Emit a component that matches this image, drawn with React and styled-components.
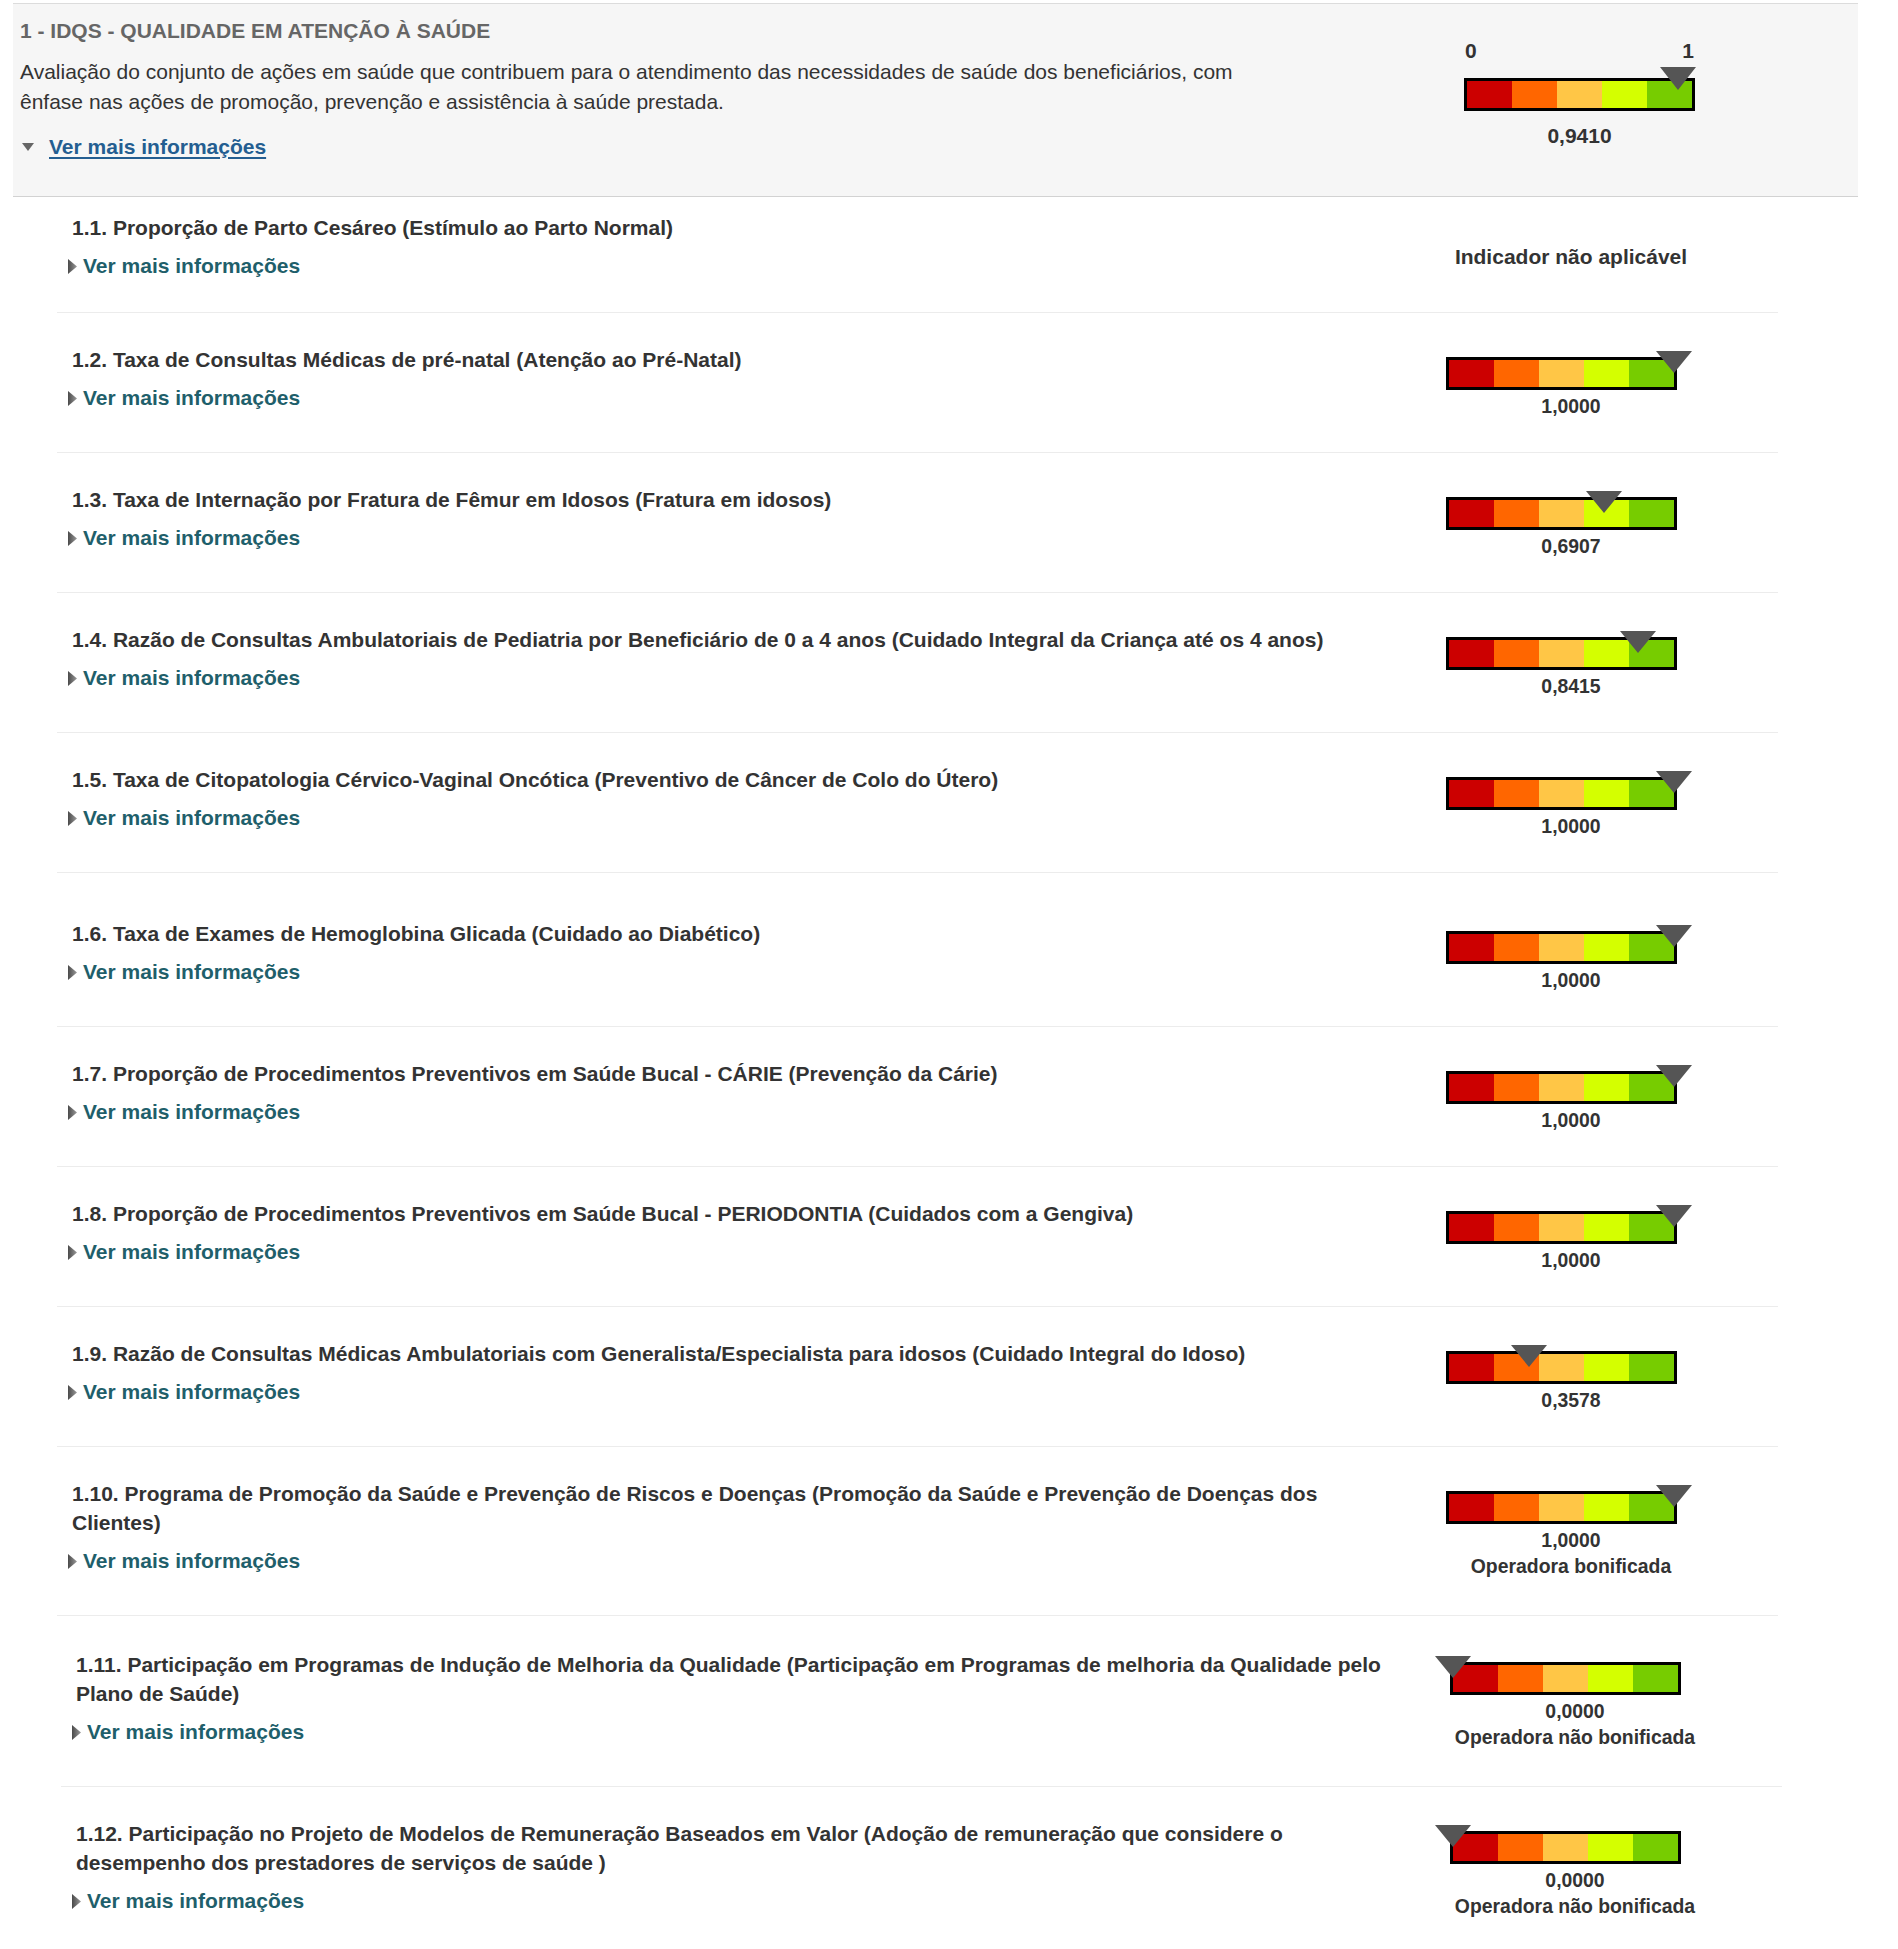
import React from "react";
import styled, { createGlobalStyle } from "styled-components";

const GlobalStyle = createGlobalStyle`
  html, body { margin: 0; padding: 0; background: #ffffff; }
  body {
    font-family: "Liberation Sans", Arial, Helvetica, sans-serif;
    color: #333333;
  }
  * { box-sizing: border-box; }
`;

const SEGMENTS = ["#cc0000", "#ff6600", "#ffc646", "#d4ff00", "#77cc00"];
const INNER = 225;

const Page = styled.div`
  width: 1898px;
  padding-top: 3px;
`;

const Header = styled.section`
  margin-left: 13px;
  width: 1845px;
  background: #f6f6f6;
  border-top: 1px solid #dcdcdc;
  border-bottom: 1px solid #d2d2d2;
  display: flex;
  align-items: flex-start;
  padding: 12px 163px 34px 7px;
`;

const HeaderText = styled.div`
  flex: 0 0 1262px;
`;

const GroupTitle = styled.h2`
  margin: 0;
  font-size: 21px;
  line-height: 30px;
  font-weight: bold;
  color: #666666;
  text-transform: uppercase;
`;

const Description = styled.p`
  margin: 11px 0 0;
  font-size: 21px;
  line-height: 30px;
  color: #333333;
`;

const MoreLink = styled.a`
  display: flex;
  align-items: center;
  gap: ${(p) => (p.$open ? "15px" : "6px")};
  margin-top: ${(p) => (p.$open ? "15px" : "9px")};
  margin-left: ${(p) => (p.$open ? "2px" : "-4px")};
  font-size: 21px;
  line-height: 30px;
  font-weight: bold;
  color: ${(p) => (p.$open ? "#245e91" : "#1f5f6b")};
  text-decoration: ${(p) => (p.$open ? "underline" : "none")};
  text-underline-offset: 3px;
  cursor: pointer;
  width: max-content;
`;

const HeaderGauge = styled.div`
  margin-left: auto;
  width: 231px;
  padding-top: 22px;
  display: flex;
  flex-direction: column;
`;

const ScaleLabels = styled.div`
  display: flex;
  justify-content: space-between;
  font-size: 21px;
  line-height: 26px;
  font-weight: bold;
  color: #333333;
  padding: 0 1px 0 1px;
  margin-bottom: 14px;
`;

const Bar = styled.div`
  position: relative;
  display: flex;
  width: 231px;
  height: 33px;
  border: 3px solid #000000;
  flex: none;
`;

const Segment = styled.div`
  flex: 1;
  background: ${(p) => p.$color};
`;

const Pointer = styled.div`
  position: absolute;
  top: ${(p) => p.$top}px;
  width: 0;
  height: 0;
  border-left: 18.5px solid transparent;
  border-right: 18.5px solid transparent;
  border-top: ${(p) => p.$h}px solid #555555;
`;

const Value = styled.div`
  margin-top: ${(p) => (p.$big ? "12px" : "3px")};
  font-size: ${(p) => (p.$big ? "21px" : "19.4px")};
  line-height: 26px;
  font-weight: bold;
  color: #333333;
  text-align: center;
`;

const StatusText = styled.div`
  font-size: 19.4px;
  line-height: 26px;
  font-weight: bold;
  color: #333333;
  text-align: center;
`;

const List = styled.div`
  display: flex;
  flex-direction: column;
`;

const Row = styled.div`
  margin-left: ${(p) => (p.$shift ? 61 : 57)}px;
  width: 1721px;
  border-bottom: 1px solid #ececec;
  display: grid;
  grid-template-columns: minmax(0, 1fr) 250px;
  column-gap: 50px;
  padding: ${(p) => p.$top}px 82px 0 15px;
`;

const TextCol = styled.div`
  padding-bottom: ${(p) => p.$bottom}px;
`;

const ItemTitle = styled.h3`
  margin: 0;
  font-size: 21px;
  line-height: 29px;
  font-weight: bold;
  color: #333333;
`;

const GaugeCol = styled.div`
  display: flex;
  flex-direction: column;
  align-self: ${(p) => (p.$center ? "center" : "start")};
  padding-top: ${(p) => (p.$center ? 0 : 12)}px;
`;

const NotApplicable = styled.div`
  font-size: 21px;
  line-height: 30px;
  font-weight: bold;
  color: #333333;
  text-align: center;
  margin-bottom: 12px;
`;

function RightArrow() {
  return (
    <svg width="9" height="15" viewBox="0 0 9 15" aria-hidden="true">
      <defs>
        <linearGradient id="arrowGrad" x1="0" y1="0" x2="1" y2="0">
          <stop offset="0" stopColor="#4a4a4a" />
          <stop offset="1" stopColor="#9a9a9a" />
        </linearGradient>
      </defs>
      <polygon points="0,0 9,7.5 0,15" fill="url(#arrowGrad)" />
    </svg>
  );
}

function DownArrow() {
  return (
    <svg width="12" height="8" viewBox="0 0 12 8" aria-hidden="true">
      <polygon points="0,0 12,0 6,8" fill="#666666" />
    </svg>
  );
}

function GaugeBar({ value, pointerTop = -9, pointerH = 22 }) {
  return (
    <Bar>
      {SEGMENTS.map((c) => (
        <Segment key={c} $color={c} />
      ))}
      <Pointer $top={pointerTop} $h={pointerH} style={{ left: value * INNER - 18.5 }} />
    </Bar>
  );
}

const ITEMS = [
  { n: "1.1.", t: "Proporção de Parto Cesáreo (Estímulo ao Parto Normal)", na: true },
  { n: "1.2.", t: "Taxa de Consultas Médicas de pré-natal (Atenção ao Pré-Natal)", v: 1 },
  { n: "1.3.", t: "Taxa de Internação por Fratura de Fêmur em Idosos (Fratura em idosos)", v: 0.6907 },
  {
    n: "1.4.",
    t: "Razão de Consultas Ambulatoriais de Pediatria por Beneficiário de 0 a 4 anos (Cuidado Integral da Criança até os 4 anos)",
    v: 0.8415,
  },
  {
    n: "1.5.",
    t: "Taxa de Citopatologia Cérvico-Vaginal Oncótica (Preventivo de Câncer de Colo do Útero)",
    v: 1,
  },
  { n: "1.6.", t: "Taxa de Exames de Hemoglobina Glicada (Cuidado ao Diabético)", v: 1, extra: 14 },
  {
    n: "1.7.",
    t: "Proporção de Procedimentos Preventivos em Saúde Bucal - CÁRIE (Prevenção da Cárie)",
    v: 1,
  },
  {
    n: "1.8.",
    t: "Proporção de Procedimentos Preventivos em Saúde Bucal - PERIODONTIA (Cuidados com a Gengiva)",
    v: 1,
  },
  {
    n: "1.9.",
    t: "Razão de Consultas Médicas Ambulatoriais com Generalista/Especialista para idosos (Cuidado Integral do Idoso)",
    v: 0.3578,
  },
  {
    n: "1.10.",
    t: "Programa de Promoção da Saúde e Prevenção de Riscos e Doenças (Promoção da Saúde e Prevenção de Doenças dos Clientes)",
    v: 1,
    status: "Operadora bonificada",
  },
  {
    n: "1.11.",
    t: "Participação em Programas de Indução de Melhoria da Qualidade (Participação em Programas de melhoria da Qualidade pelo Plano de Saúde)",
    v: 0,
    status: "Operadora não bonificada",
    shift: true,
    extra: 2,
  },
  {
    n: "1.12.",
    t: "Participação no Projeto de Modelos de Remuneração Baseados em Valor (Adoção de remuneração que considere o desempenho dos prestadores de serviços de saúde )",
    v: 0,
    status: "Operadora não bonificada",
    shift: true,
  },
];

function fmt(v) {
  return v.toFixed(4).replace(".", ",");
}

export default function App() {
  return (
    <Page>
      <GlobalStyle />
      <Header>
        <HeaderText>
          <GroupTitle>1 - IDQS - Qualidade em Atenção à Saúde</GroupTitle>
          <Description>
            Avaliação do conjunto de ações em saúde que contribuem para o atendimento das necessidades
            de saúde dos beneficiários, com ênfase nas ações de promoção, prevenção e assistência à
            saúde prestada.
          </Description>
          <MoreLink $open>
            <DownArrow />
            Ver mais informações
          </MoreLink>
        </HeaderText>
        <HeaderGauge>
          <ScaleLabels>
            <span>0</span>
            <span>1</span>
          </ScaleLabels>
          <GaugeBar value={0.941} pointerTop={-14} pointerH={23} />
          <Value $big>0,9410</Value>
        </HeaderGauge>
      </Header>
      <List>
        {ITEMS.map((it) => (
          <Row
            key={it.n}
            $shift={it.shift}
            $top={it.na ? 16 : 32 + (it.extra || 0)}
          >
            <TextCol $bottom={it.na ? 31 : 39}>
              <ItemTitle>
                {it.n} {it.t}
              </ItemTitle>
              <MoreLink>
                <RightArrow />
                Ver mais informações
              </MoreLink>
            </TextCol>
            {it.na ? (
              <GaugeCol $center>
                <NotApplicable>Indicador não aplicável</NotApplicable>
              </GaugeCol>
            ) : (
              <GaugeCol>
                <GaugeBar value={it.v} />
                <Value>{fmt(it.v)}</Value>
                {it.status && <StatusText>{it.status}</StatusText>}
              </GaugeCol>
            )}
          </Row>
        ))}
      </List>
    </Page>
  );
}
